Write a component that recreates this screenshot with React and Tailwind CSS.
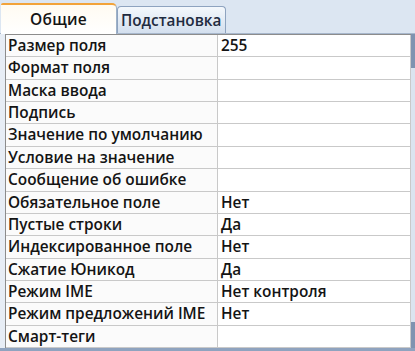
export default function App() {
  const rows = [
    ["Размер поля", "255"],
    ["Формат поля", ""],
    ["Маска ввода", ""],
    ["Подпись", ""],
    ["Значение по умолчанию", ""],
    ["Условие на значение", ""],
    ["Сообщение об ошибке", ""],
    ["Обязательное поле", "Нет"],
    ["Пустые строки", "Да"],
    ["Индексированное поле", "Нет"],
    ["Сжатие Юникод", "Да"],
    ["Режим IME", "Нет контроля"],
    ["Режим предложений IME", "Нет"],
    ["Смарт-теги", ""],
  ];
  return (
    <div
      className="w-[415px] h-[351px] bg-[#dce6f2] overflow-hidden flex flex-col text-[#141414]"
      style={{ fontFamily: '"Open Sans", "Noto Sans", sans-serif' }}
    >
      <div className="h-[33px] flex items-end pl-[1px] shrink-0">
        <div className="w-[116px] h-[31px] rounded-tr-[5px] rounded-tl-[2px] border-t-2 border-t-[#f2a33a] border-r border-r-[#9fb2c8] bg-gradient-to-b from-[#fffbf2] to-white flex items-center justify-center text-[15.5px] font-semibold tracking-[0.3px] relative top-[1px]">
          Общие
        </div>
        <div className="w-[109px] h-[27px] rounded-t-[4px] border border-b-0 border-[#8ea3bf] bg-gradient-to-b from-[#f4f8fc] to-[#d3dfee] flex items-center pl-[3px] text-[15.3px] font-semibold text-[#1f2b40]">
          Подстановка
        </div>
      </div>
      <div className="flex-1 flex border-t border-[#a7b7cc] bg-[#eef3f9]">
        <div className="w-[5px] shrink-0 bg-[#e7edf5]" />
        <div className="w-[406px] h-[314px] border-l border-t border-[#8c8c8c] bg-white">
          {rows.map(([k, v], i) => (
            <div key={i} className="flex h-[22.36px] border-b border-[#c9c9c9]">
              <div className="w-[212px] shrink-0 bg-[#fbfbfb] border-r border-[#c9c9c9] pl-[2px] text-[15.4px] font-semibold leading-[21px] whitespace-nowrap overflow-hidden">
                {k}
              </div>
              <div className="flex-1 pl-[3px] text-[15.4px] font-semibold leading-[21px] whitespace-nowrap bg-white border-r border-[#c9c9c9]">
                {v}
              </div>
            </div>
          ))}
        </div>
        <div className="w-[4px] shrink-0 flex flex-col bg-[#c5d3e6]">
          <div className="h-[34px] bg-[#7f93b0]" />
          <div className="flex-1 bg-[#dbe4ef]" />
          <div className="h-[26px] bg-[#7f93b0]" />
        </div>
      </div>
      <div className="h-[4px] shrink-0 bg-[#8fa3bf]" />
    </div>
  );
}
